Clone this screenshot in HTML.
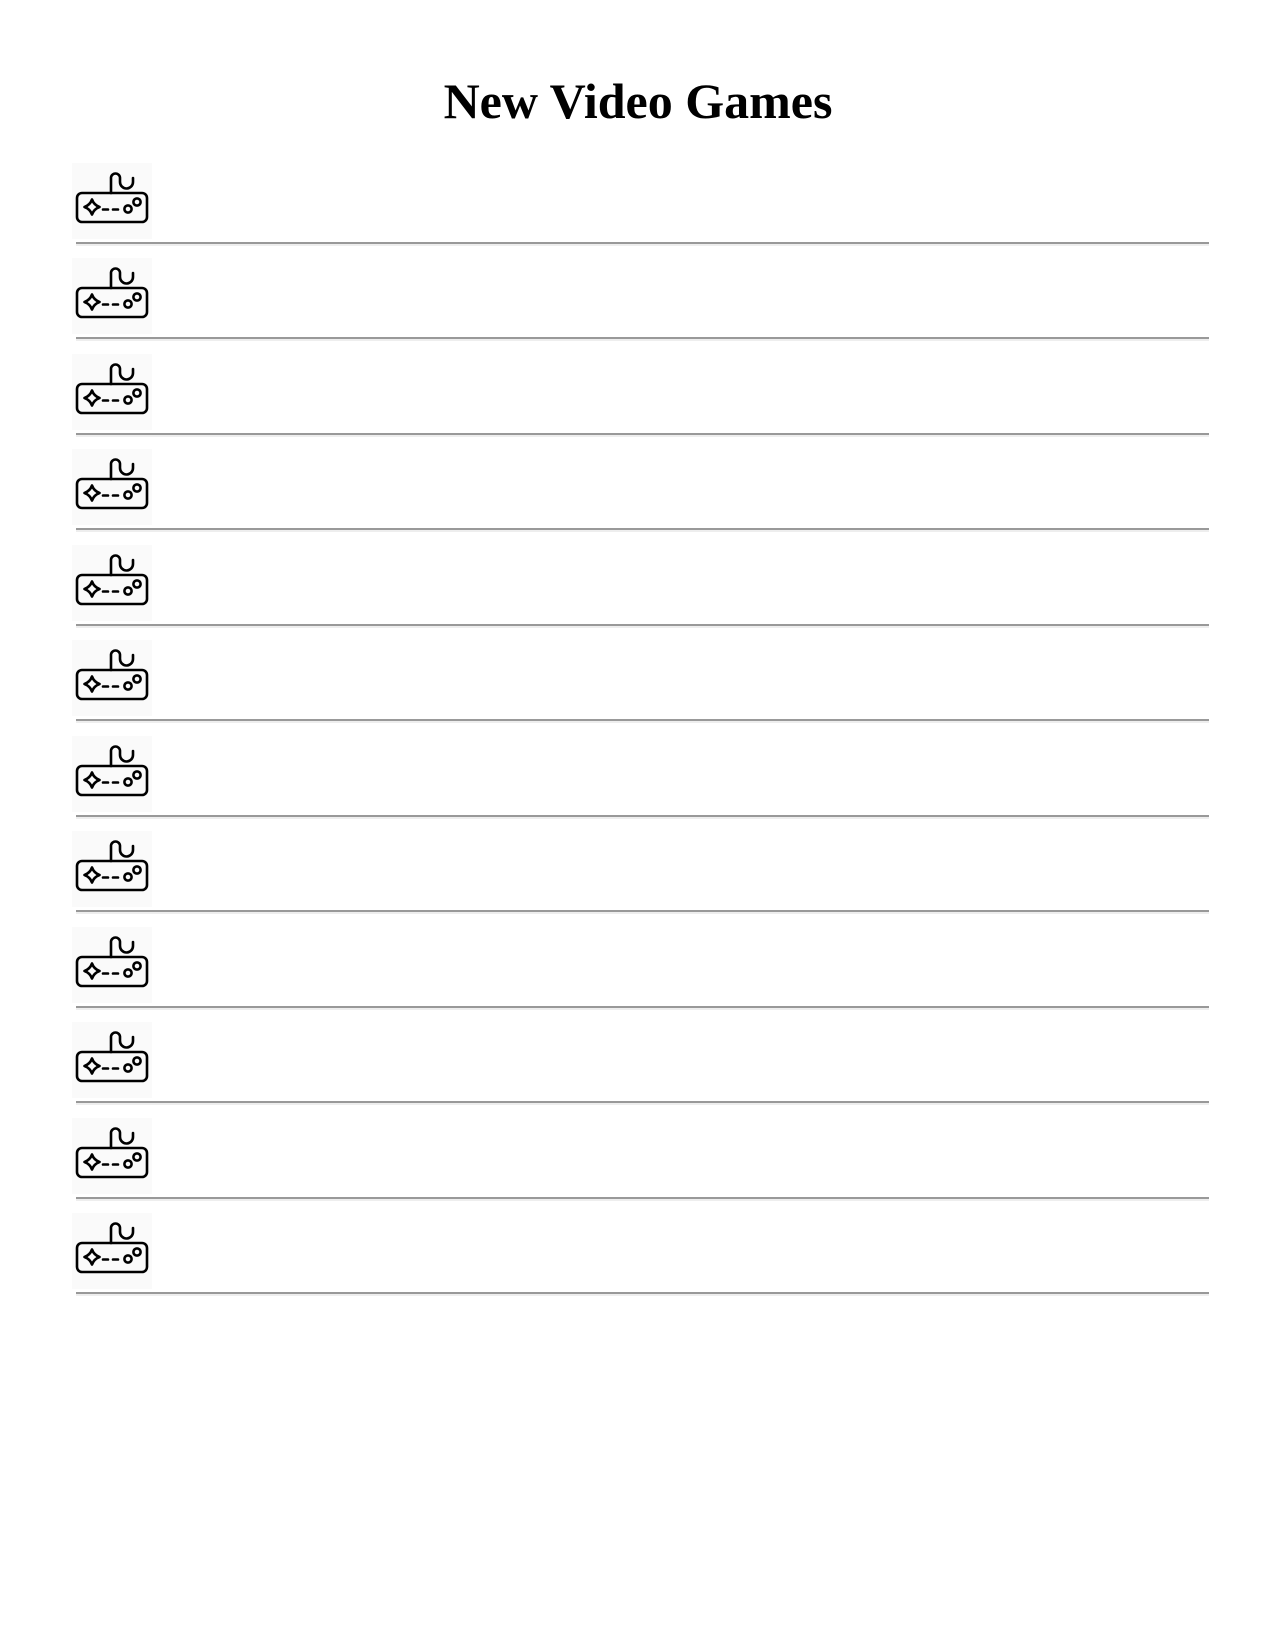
<!DOCTYPE html>
<html><head><style>
body{margin:0;background:#fff;width:1275px;height:1651px;position:relative;overflow:hidden}
h1{position:absolute;left:0;width:1276px;top:71px;margin:0;text-align:center;font:bold 50px "Liberation Serif",serif;line-height:60px;color:#000}
.r{position:absolute;left:0;width:1275px;height:95px}
.ic{position:absolute;left:72px;top:0;width:80px;height:76px;background:#fafafa}
.hr{position:absolute;left:76px;width:1133px;top:79px;height:2px;background:#999;border-bottom:2px solid #eee}
</style></head><body>
<h1>New Video Games</h1>
<div id="c"></div>
<script>
var s='';
for(var i=0;i<12;i++){
var t=163+i*95.45;
s+='<div class="r" style="top:'+t+'px"><div class="ic"><svg width="80" height="76" viewBox="72 163 80 76"><g fill="none" stroke="#000" stroke-width="2.6" stroke-linecap="round" stroke-linejoin="round"><rect x="77" y="193" width="70" height="29" rx="5"/><path d="M111 193V178a4.5 4.5 0 0 1 9 0v4a6.5 6.5 0 0 0 13 0v-4"/><path d="M92 199.5q2 5.5 7.5 7.5q-5.5 2 -7.5 7.5q-2 -5.5 -7.5 -7.5q5.5 -2 7.5 -7.5z"/><path d="M103 209.5h5M113 209.5h5"/><circle cx="128" cy="209" r="3.6"/><circle cx="137" cy="202" r="3.6"/></g></svg></div><div class="hr"></div></div>';
}
document.getElementById('c').innerHTML=s;
</script>
</body></html>
